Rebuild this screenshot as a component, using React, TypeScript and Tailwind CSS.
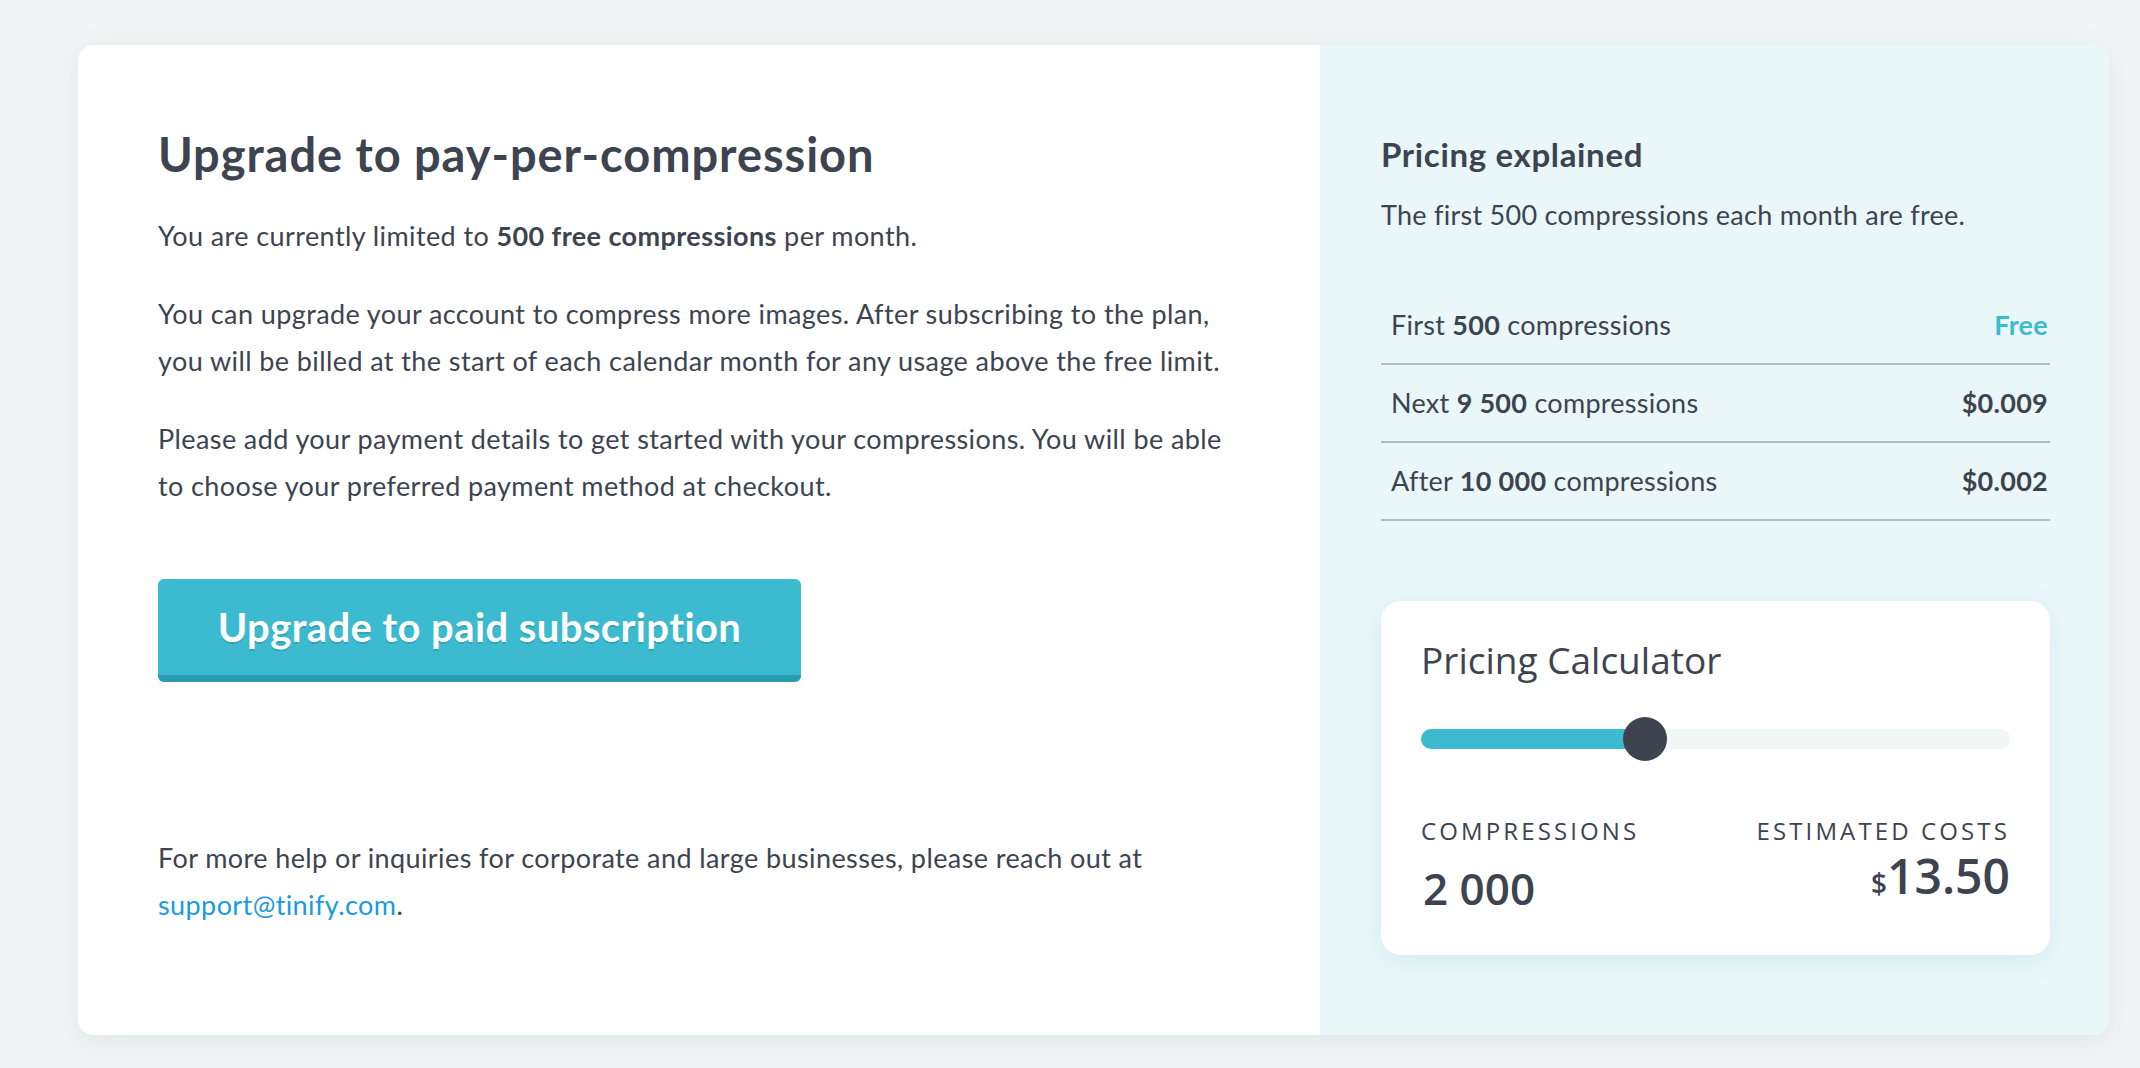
const ink = "text-[#3e4350]";

const PricingRow = ({
  pre,
  count,
  price,
  free
}: {
  pre: string;
  count: string;
  price: string;
  free?: boolean;
}) => (
  <div className="flex h-[78px] items-center justify-between border-b-2 border-[#a9c0c7] pl-[10px] pr-[2px] text-[27px] tracking-[0.01em]">
    <span>
      {pre} <b className="font-bold">{count}</b> compressions
    </span>
    <span className={free ? "font-bold text-[#3bbad0]" : "font-bold"}>{price}</span>
  </div>
);

const PricingCalculator = () => {
  const fill = 224;
  return (
    <div className="mt-[80px] rounded-[20px] bg-white px-[40px] pb-[39px] pt-[35px] shadow-[0_6px_24px_rgba(80,140,160,0.12)] font-['Open_Sans',sans-serif]">
      <h3 className="text-[37px] font-medium leading-[48px]">Pricing Calculator</h3>

      <div className="relative mt-[33px] h-[44px]">
        <div className="absolute left-0 right-0 top-[12px] h-[20px] rounded-full bg-[#f3f6f7]" />
        <div
          className="absolute left-0 top-[12px] h-[20px] rounded-full bg-[#3bbad0]"
          style={{ width: fill }}
        />
        <div
          className="absolute top-0 h-[44px] w-[44px] -translate-x-1/2 rounded-full bg-[#3e4350]"
          style={{ left: fill }}
        />
      </div>

      <div className="mt-[54px] flex justify-between text-[24px] leading-[32px] tracking-[0.13em]">
        <span>COMPRESSIONS</span>
        <span>ESTIMATED COSTS</span>
      </div>
      <div className="mt-[1px] flex items-end justify-between leading-[56px]">
        <span className="pl-[2px] text-[44px] font-semibold">2 000</span>
        <span className="font-semibold">
          <span className="text-[28px]">$</span>
          <span className="text-[48px]">13.50</span>
        </span>
      </div>
    </div>
  );
};

export default function App() {
  return (
    <div className={`min-h-screen bg-[#f1f4f5] pl-[78px] pt-[45px] ${ink} font-['Lato',sans-serif]`}>
      <div className="flex h-[990px] w-[2031px] overflow-hidden rounded-2xl shadow-[0_6px_28px_rgba(40,60,70,0.08)]">
        {/* left column */}
        <div className="flex w-[1242px] flex-col bg-white pl-[80px] pt-[81px]">
          <h1 className="text-[47px] font-bold leading-[56px] tracking-[0.02em]">Upgrade to pay-per-compression</h1>

          <div className="mt-[30px] flex flex-col gap-[31px] text-[27px] leading-[47px] tracking-[0.015em]">
            <p>
              You are currently limited to <b className="font-bold">500 free compressions</b> per month.
            </p>
            <p>
              You can upgrade your account to compress more images. After subscribing to the plan,
              <br />
              you will be billed at the start of each calendar month for any usage above the free limit.
            </p>
            <p>
              Please add your payment details to get started with your compressions. You will be able
              <br />
              to choose your preferred payment method at checkout.
            </p>
          </div>

          <button className="mt-[70px] h-[103px] w-[643px] rounded-[6px] border-b-[7px] border-[#2a9bb0] bg-[#3bbad0] text-[40px] font-bold tracking-[0.01em] text-white [text-shadow:0_2px_0_rgba(0,0,0,0.12)]">
            Upgrade to paid subscription
          </button>

          <p className="mt-[152px] text-[27px] leading-[47px] tracking-[0.015em]">
            For more help or inquiries for corporate and large businesses, please reach out at
            <br />
            <a className="text-[#1b9ae2]">support@tinify.com</a>.
          </p>
        </div>

        {/* right column */}
        <div className="flex-1 bg-[#e9f7f9] pl-[61px] pr-[59px] pt-[88px]">
          <h2 className="text-[33px] font-bold leading-[42px] tracking-[0.02em]">Pricing explained</h2>
          <p className="mt-[20px] text-[27px] leading-[40px] tracking-[0.01em]">
            The first 500 compressions each month are free.
          </p>

          <div className="mt-[52px]">
            <PricingRow pre="First" count="500" price="Free" free />
            <PricingRow pre="Next" count="9 500" price="$0.009" />
            <PricingRow pre="After" count="10 000" price="$0.002" />
          </div>

          <PricingCalculator />
        </div>
      </div>
    </div>
  );
}
